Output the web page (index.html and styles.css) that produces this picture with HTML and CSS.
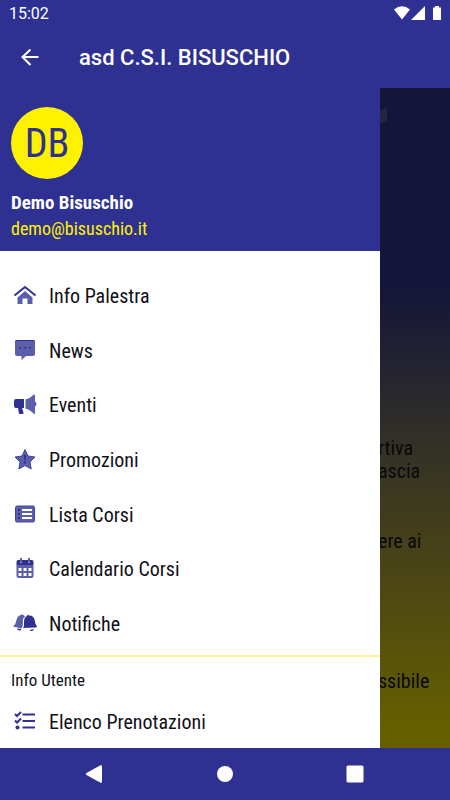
FILE: index.html
```html
<!DOCTYPE html>
<html lang="it">
<head>
<meta charset="utf-8">
<meta name="viewport" content="width=device-width, initial-scale=1">
<title>asd C.S.I. BISUSCHIO</title>
<link rel="stylesheet" href="styles.css">
</head>
<body>
<div class="status">
  <span>15:02</span>
  <svg class="status-icons" viewBox="0 0 50 16" aria-hidden="true"><path d="M0 3.500Q8-3 16 3.500L8 13.500Z"/><path d="M31 0V14H17Z"/><path d="M39 1.500h2V0h4v1.500h2V14h-8Z"/></svg>
</div>
<header class="appbar">
  <button class="back" aria-label="Indietro"><svg viewBox="0 0 18 18"><path d="M17.500 8H2M9.500 0.500 1.500 8l8 8"/></svg></button>
  <h1>asd C.S.I. BISUSCHIO</h1>
</header>
<main class="stage">
  <article class="page">
    <svg class="emblem" viewBox="0 0 9 17" aria-hidden="true"><path d="M1 5 9 2V15L1 18Z"/></svg>
    <p>rtiva<br>ascia</p>
    <p>ere ai</p>
    <p>ssibile</p>
  </article>
  <aside class="drawer">
    <section class="profile">
      <div class="avatar">DB</div>
      <strong>Demo Bisuschio</strong>
      <a href="mailto:demo@bisuschio.it">demo@bisuschio.it</a>
    </section>
    <nav class="menu">
      <a href="#"><svg viewBox="0 0 24 24"><path class="soft" d="M12 7 19.500 13.500v6.500h-5V14.500h-5V20h-5V13.500Z"/><path class="line" d="m1.500 11.500 10.500-8.500 10.500 8.500"/></svg>Info Palestra</a>
      <a href="#"><svg viewBox="0 0 24 24"><path class="soft" d="M4 1h16q2 0 2 2v12q0 2-2 2h-7l-4.500 4v-4H4q-2 0-2-2V3q0-2 2-2Z"/><path d="M2 4V3q0-2 2-2h16q2 0 2 2v1q0-2-2-2H4Q2 2 2 4ZM6 8h2v1.500H6Zm5 0h2v1.500h-2Zm5 0h2v1.500h-2Z"/></svg>News</a>
      <a href="#"><svg viewBox="0 0 24 24"><path d="M3 6h8v9H9l1.500 4.500q.3 1.500-1 1.500H7q-1 0-1.200-1L5 15H3q-2 0-2-2V8q0-2 2-2Z"/><path class="soft" d="M12.500 6.500Q17 5.500 21 1.500q1-.5 1 1v6q1.500.5 1.500 2.500T22 13.500V20q0 1.500-1 1Q17 16.500 12.500 15.500Z"/></svg>Eventi</a>
      <a href="#"><svg viewBox="0 0 24 24"><path class="soft edge" d="m12 1.500 3 6.500 7 1-5 5 1.200 7L12 17.500l-6.200 3.500 1.200-7-5-5 7-1Z"/><path d="M11 7h2l-.4 5.500h-1.200Zm0 6.500h2v2h-2Z"/></svg>Promozioni</a>
      <a href="#"><svg viewBox="0 0 24 24"><rect class="soft edge" x="2.500" y="3" width="19" height="16" rx="1.500"/><path class="white" d="M9 6h10v2H9Zm0 4h10v2H9Zm0 4h10v2H9Z"/><path d="M5 6h2v2H5Zm0 4h2v2H5Zm0 4h2v2H5Z"/></svg>Lista Corsi</a>
      <a href="#"><svg viewBox="0 0 24 24"><path class="soft" d="M3.500 8h17v11q0 2-2 2h-13q-2 0-2-2ZM7 1h2v4H7Zm8 0h2v4h-2Z"/><path d="M5 3h2v2.500h2V3h6v2.500h2V3h2q1.500 0 1.500 2v3h-17V5Q3.500 3 5 3Z"/><path class="white" d="M5.500 11h3v3h-3Zm5 0h3v3h-3Zm5 0h3v3h-3Zm-10 5h3v3h-3Zm5 0h3v3h-3Zm5 0h3v3h-3Z"/></svg>Calendario Corsi</a>
      <a href="#"><svg viewBox="0 0 24 24"><path class="soft" d="M0 14.500Q3 12 3.500 8 4.500 3.500 8 3l1-1 1 1q1.500 0 2 1.500-3 2-2 6 0 4-1.500 6Z"/><path d="M10 16q1.500-2 1-6Q11 5 14 4l.5-1.500L16 3.500q4-.5 5.500 4 .5 4.500 2.500 7 0 1-1.500 1ZM16.500 18l4.500-1q-.5 2-2.200 2T16.500 18ZM4 16.500l4.500.5Q7.500 18.500 6 18.500T4 16.500Z"/></svg>Notifiche</a>
    </nav>
    <section class="user">
      <h2>Info Utente</h2>
      <a href="#"><svg viewBox="0 0 24 24"><path class="line" d="M9.500 4.500H22M9.500 11H22M9.500 17.500H22"/><path class="check" d="m2 4 2 2 4-4M2 10.500l2 2 4-4"/><circle cx="4.500" cy="17.500" r="2"/></svg>Elenco Prenotazioni</a>
    </section>
  </aside>
</main>
<footer class="system">
  <button aria-label="Indietro"><svg viewBox="0 0 20 20"><path d="M16 1.500q2-1 2 1v15q0 2-2 1L2.500 11q-1.500-1 0-2Z"/></svg></button>
  <button aria-label="Home"><svg viewBox="0 0 20 20"><circle cx="10" cy="10" r="8"/></svg></button>
  <button aria-label="Recenti"><svg viewBox="0 0 20 20"><rect x="1.500" y="1.500" width="17" height="17" rx="1.500"/></svg></button>
</footer>
</body>
</html>
```
FILE: styles.css
```css
* { box-sizing: border-box; }
body {
  margin: 0;
  min-height: 100vh;
  display: flex;
  flex-direction: column;
  font-family: "Roboto Condensed", Roboto, sans-serif;
  color: #111118;
  background: #2e3192;
}
a { color: inherit; text-decoration: none; }
button { border: 0; padding: 0; background: none; display: flex; }
h1, h2, p { margin: 0; font-weight: inherit; }
.status {
  display: flex;
  align-items: center;
  justify-content: space-between;
  height: 28px;
  padding: 0 6px 0 9px;
  color: #fff;
  font: 400 16px/28px Roboto, sans-serif;
}
.status-icons { width: 50px; height: 16px; fill: #fff; }
.appbar {
  display: flex;
  align-items: center;
  gap: 40px;
  height: 60px;
  padding: 0 21px;
  color: #fff;
}
.appbar h1 { font: 500 22px/28px Roboto, sans-serif; }
.back svg { width: 18px; height: 18px; fill: none; stroke: #fff; stroke-width: 2; }
.stage { flex: 1; display: grid; }
.page, .drawer { grid-area: 1 / 1; }
.page {
  padding: 18px 0 0 378px;
  background: linear-gradient(#14153a 0 30%, #2e2c2a 50%, #665f00 97%);
  font-size: 20px;
  line-height: 23px;
  color: #08080c;
}
.emblem { display: block; width: 9px; height: 17px; margin-bottom: 314px; fill: #252642; overflow: visible; }
.page p { margin-bottom: 47px; }
.page p + p + p { margin-top: 117px; }
.drawer {
  width: 380px;
  max-width: 85%;
  display: flex;
  flex-direction: column;
  background: #fff;
  z-index: 1;
}
.profile {
  display: flex;
  flex-direction: column;
  align-items: flex-start;
  padding: 19px 11px 9px;
  background: #2e3192;
  color: #fff;
  font-size: 19px;
  line-height: 26px;
}
.avatar {
  width: 72px;
  height: 72px;
  margin-bottom: 11px;
  border-radius: 50%;
  background: #fff200;
  color: #2e3192;
  font-size: 40px;
  line-height: 74px;
  text-align: center;
}
.profile a { color: #fff200; font-size: 18px; }
.menu { flex: 1; display: flex; flex-direction: column; padding: 18px 0 4px; }
.menu a, .user a {
  display: flex;
  align-items: center;
  gap: 12px;
  padding-left: 13px;
  font-size: 20px;
}
.menu a { flex: 1; }
.drawer svg { width: 24px; height: 24px; fill: #2e3192; }
.drawer .soft { fill: #5b5eaa; }
.drawer .edge { stroke: #4245a0; }
.drawer .white { fill: #fff; }
.drawer .line, .drawer .check { fill: none; stroke: #2e3192; stroke-width: 2; }
.user { border-top: 2px solid #fff592; padding-top: 11px; }
.user h2 { padding-left: 11px; font-size: 17px; line-height: 24px; }
.user a { height: 56px; padding-top: 3px; }
.system {
  display: flex;
  align-items: center;
  justify-content: space-between;
  height: 52px;
  padding: 0 85px 0 84px;
}
.system svg { width: 20px; height: 20px; fill: #fff; }
```
